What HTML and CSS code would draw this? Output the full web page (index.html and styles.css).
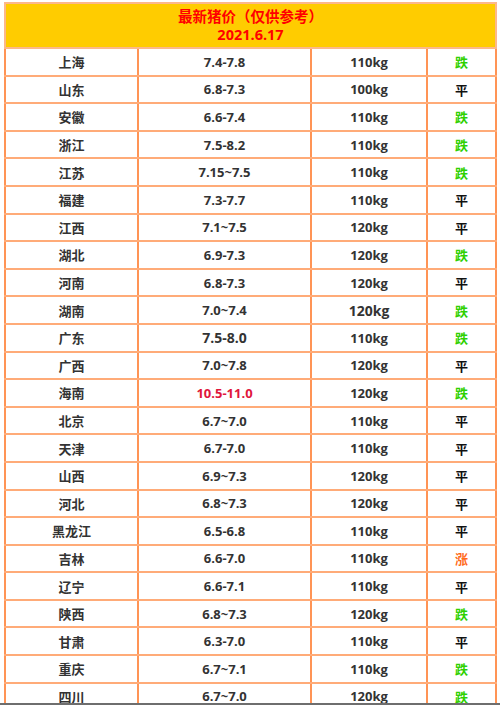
FILE: index.html
```html
<!DOCTYPE html>
<html lang="zh">
<head>
<meta charset="utf-8">
<link rel="stylesheet" href="styles.css">
</head>
<body>
<table class="price-table">
  <colgroup>
    <col class="c-region"><col class="c-price"><col class="c-weight"><col class="c-trend">
  </colgroup>
  <thead>
    <tr class="head-row"><th colspan="4"><div class="title">最新猪价（仅供参考）</div><div class="date">2021.6.17</div></th></tr>
  </thead>
  <tbody>
    <tr><td>上海</td><td>7.4-7.8</td><td>110kg</td><td class="down">跌</td></tr>
    <tr><td>山东</td><td>6.8-7.3</td><td>100kg</td><td class="flat">平</td></tr>
    <tr><td>安徽</td><td>6.6-7.4</td><td>110kg</td><td class="down">跌</td></tr>
    <tr><td>浙江</td><td>7.5-8.2</td><td>110kg</td><td class="down">跌</td></tr>
    <tr><td>江苏</td><td>7.15~7.5</td><td>110kg</td><td class="down">跌</td></tr>
    <tr><td>福建</td><td>7.3-7.7</td><td>110kg</td><td class="flat">平</td></tr>
    <tr><td>江西</td><td>7.1~7.5</td><td>120kg</td><td class="flat">平</td></tr>
    <tr><td>湖北</td><td>6.9-7.3</td><td>120kg</td><td class="down">跌</td></tr>
    <tr><td>河南</td><td>6.8-7.3</td><td>120kg</td><td class="flat">平</td></tr>
    <tr><td>湖南</td><td>7.0~7.4</td><td class="big">120kg</td><td class="down">跌</td></tr>
    <tr><td>广东</td><td class="big">7.5-8.0</td><td>110kg</td><td class="down">跌</td></tr>
    <tr><td>广西</td><td>7.0~7.8</td><td>120kg</td><td class="flat">平</td></tr>
    <tr><td>海南</td><td class="hot">10.5-11.0</td><td>120kg</td><td class="down">跌</td></tr>
    <tr><td>北京</td><td>6.7~7.0</td><td>110kg</td><td class="flat">平</td></tr>
    <tr><td>天津</td><td>6.7-7.0</td><td>110kg</td><td class="flat">平</td></tr>
    <tr><td>山西</td><td>6.9~7.3</td><td>120kg</td><td class="flat">平</td></tr>
    <tr><td>河北</td><td>6.8~7.3</td><td>120kg</td><td class="flat">平</td></tr>
    <tr><td>黑龙江</td><td>6.5-6.8</td><td>110kg</td><td class="flat">平</td></tr>
    <tr><td>吉林</td><td>6.6-7.0</td><td>110kg</td><td class="up">涨</td></tr>
    <tr><td>辽宁</td><td>6.6-7.1</td><td>110kg</td><td class="flat">平</td></tr>
    <tr><td>陕西</td><td>6.8~7.3</td><td>120kg</td><td class="down">跌</td></tr>
    <tr><td>甘肃</td><td>6.3-7.0</td><td>110kg</td><td class="flat">平</td></tr>
    <tr><td>重庆</td><td>6.7~7.1</td><td>110kg</td><td class="down">跌</td></tr>
    <tr><td>四川</td><td>6.7~7.0</td><td>120kg</td><td class="down">跌</td></tr>
  </tbody>
</table>
<div class="frame-bottom"></div>
</body>
</html>
```
FILE: styles.css
```css
html, body {
  margin: 0;
  padding: 0;
  background: #ffffff;
  overflow: hidden;
}
body {
  padding: 2px 0 0 4px;
  font-family: "Open Sans", "Noto Sans CJK SC", sans-serif;
  font-weight: 700;
  color: #333333;
}
.price-table {
  width: 491px;
  border-collapse: collapse;
  table-layout: fixed;
}
.c-region { width: 133px; }
.c-price { width: 173px; }
.c-weight { width: 116px; }
.c-trend { width: 69px; }
.head-row th {
  background: #ffcc00;
  border: 2px solid #fcb88a;
  height: 42px;
  padding: 1px 0 0 0;
  color: #ff0000;
  font-size: 14.5px;
  line-height: 18px;
  font-family: "Open Sans", "Noto Sans CJK SC", sans-serif;
}
.price-table td {
  height: 25.6px;
  padding: 0;
  text-align: center;
  font-size: 13px;
  border-top: 2px solid #ffab78;
  border-bottom: 2px solid #ffab78;
  border-left: 2px solid #ff9455;
  border-right: 2px solid #ff9455;
  font-family: "Open Sans", "Noto Sans CJK SC", sans-serif;
}
.price-table td:first-child {
  font-family: "Noto Sans CJK SC", sans-serif;
  color: #333333;
}
.price-table td.big { font-size: 14px; }
.price-table td.hot { color: #e0163c; }
.price-table td.down { color: #2fd000; font-family: "Noto Sans CJK SC", sans-serif; }
.price-table td.up { color: #ff6a1a; font-family: "Noto Sans CJK SC", sans-serif; }
.price-table td.flat { color: #111111; font-family: "Noto Sans CJK SC", sans-serif; }
.frame-bottom {
  position: fixed;
  left: 0;
  right: 0;
  bottom: 0;
  height: 2px;
  background: #6e6e6e;
}
```
